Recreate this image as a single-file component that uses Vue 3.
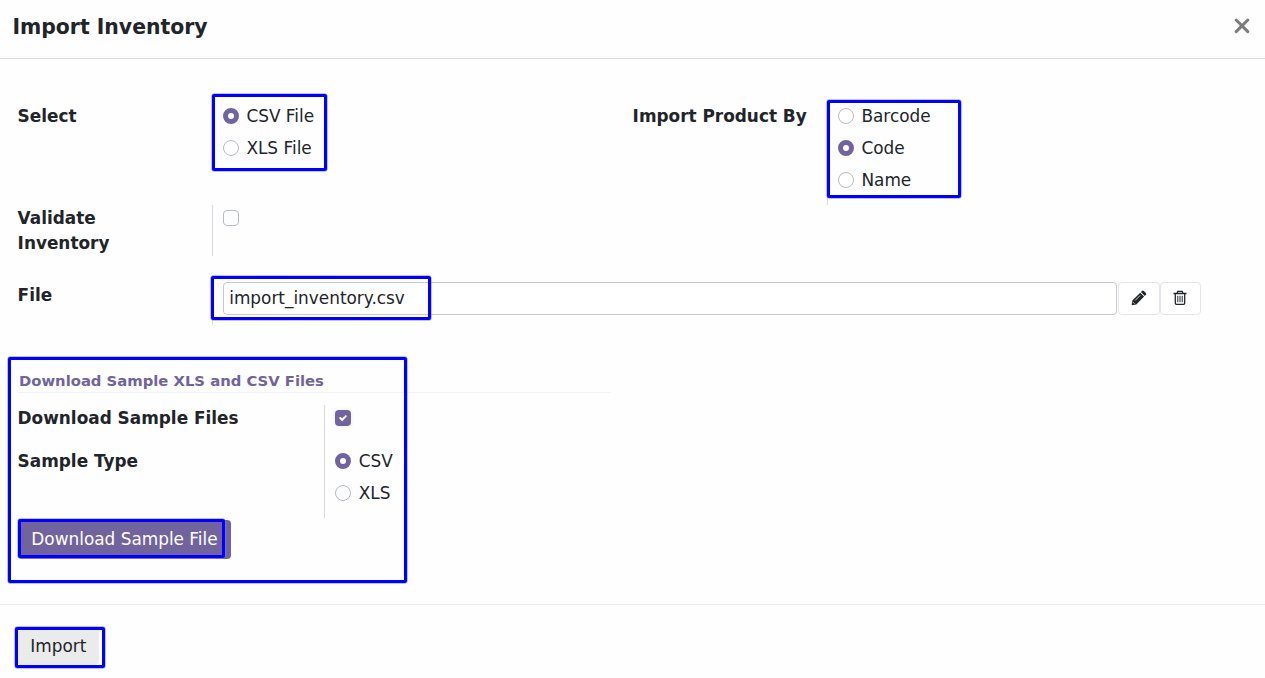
<script setup>
const selectOptions = [
  { label: 'CSV File', on: true },
  { label: 'XLS File', on: false },
]
const productOptions = [
  { label: 'Barcode', on: false },
  { label: 'Code', on: true },
  { label: 'Name', on: false },
]
const sampleOptions = [
  { label: 'CSV', on: true },
  { label: 'XLS', on: false },
]
</script>

<template>
  <div class="dialog">
    <header class="header">
      <h4 class="title">Import Inventory</h4>
      <svg class="close" width="16" height="16" viewBox="0 0 16 16"><path d="M2.2 2 13.8 13.6M13.8 2 2.2 13.6" /></svg>
    </header>

    <main class="body">
      <div class="row options">
        <div class="label">Select</div>
        <div class="field">
          <div v-for="o in selectOptions" :key="o.label" class="radio-item">
            <span class="radio" :class="{ on: o.on }"></span><span>{{ o.label }}</span>
          </div>
        </div>
        <div class="label product">Import Product By</div>
        <div class="field ruled">
          <div v-for="o in productOptions" :key="o.label" class="radio-item">
            <span class="radio" :class="{ on: o.on }"></span><span>{{ o.label }}</span>
          </div>
        </div>
      </div>

      <div class="row validate">
        <div class="label">Validate<br>Inventory</div>
        <div class="field ruled"><span class="check"></span></div>
      </div>

      <div class="row file">
        <div class="label">File</div>
        <div class="field ruled file-field">
          <div class="input">import_inventory.csv</div>
          <button class="icon-btn edit">
            <svg width="16" height="16" viewBox="0 0 16 16">
              <path fill="#212529" d="M.6 15.2 1.4 10.5 9.2 2.7 13.1 6.6 5.3 14.4ZM9.9 2 11 .9Q11.9.2 12.8.9L14.9 3Q15.6 3.9 14.9 4.8L13.8 5.9Z" />
              <path stroke="#fff" stroke-width=".8" fill="none" d="M2 12.2 3.6 13.8M4.2 10.4 9.2 5.4" />
            </svg>
          </button>
          <button class="icon-btn trash">
            <svg width="14" height="16" viewBox="0 0 14 16">
              <path fill="none" stroke="#212529" stroke-width="1.3" d="M.5 3.5H13.5M4 3.3 4.8 1.4H9.2L10 3.3M2.3 3.5V13Q2.3 14.4 3.5 14.4H10.5Q11.7 14.4 11.7 13V3.5" />
              <path stroke="#212529" stroke-width="1" d="M4.8 5.8V12.2M7 5.8V12.2M9.2 5.8V12.2" />
            </svg>
          </button>
        </div>
      </div>

      <section class="sample">
        <div class="section-title">Download Sample XLS and CSV Files</div>
        <div class="sample-grid">
          <div class="sample-labels">
            <div>Download Sample Files</div>
            <div>Sample Type</div>
          </div>
          <div class="sample-fields">
            <span class="check on">
              <svg width="16" height="16" viewBox="0 0 16 16"><path d="M5.2 8.1 7.1 9.8 10.8 6.2" /></svg>
            </span>
            <div v-for="o in sampleOptions" :key="o.label" class="radio-item">
              <span class="radio" :class="{ on: o.on }"></span><span>{{ o.label }}</span>
            </div>
          </div>
        </div>
        <button class="download">Download Sample File</button>
      </section>
    </main>

    <footer class="footer">
      <button class="import">Import</button>
    </footer>

    <div class="mark mark-select"></div>
    <div class="mark mark-product"></div>
    <div class="mark mark-file"></div>
    <div class="mark mark-sample"></div>
    <div class="mark mark-download"></div>
    <div class="mark mark-import"></div>
  </div>
</template>

<style>
body { margin: 0; background: #fff; overflow: hidden; }
</style>

<style scoped>
.dialog, .dialog * { box-sizing: border-box; }
.dialog {
  position: relative;
  width: 1265px;
  height: 678px;
  display: flex;
  flex-direction: column;
  overflow: hidden;
  background: #fefefe;
  color: #212529;
  font: 16.9px/25px "DejaVu Sans", sans-serif;
}
button { font: inherit; margin: 0; padding: 0; cursor: pointer; }
.header {
  height: 59px;
  flex: none;
  display: flex;
  justify-content: space-between;
  align-items: flex-start;
  padding: 12px 15px 0 12.4px;
  border-bottom: 1px solid #dee0e2;
}
.title { margin: 0; font-size: 20.4px; line-height: 30px; font-weight: bold; }
.close { margin-top: 6px; fill: none; stroke: #7d7d7d; stroke-width: 3; stroke-linecap: round; }
.body { height: 545px; flex: none; padding-top: 40px; }
.row { display: flex; padding-left: 17px; }
.options { height: 106px; }
.label { width: 195px; flex: none; font-weight: bold; padding: 5px 0 0 0.6px; }
.product { margin-left: 305px; }
.options .field:nth-child(2) { width: 115px; flex: none; }
.field { padding-left: 11px; }
.ruled { border-left: 1px solid #d8dadd; padding-left: 10px; }
.radio-item { height: 32px; display: flex; align-items: center; gap: 7.4px; padding-top: 2px; }
.radio {
  width: 16px;
  height: 16px;
  flex: none;
  border: 1px solid #b5bbc3;
  border-radius: 50%;
  background: #fff;
}
.radio.on { border: 5px solid #71639e; }
.validate { height: 51px; }
.check {
  display: block;
  width: 16px;
  height: 16px;
  margin-top: 5px;
  border: 1px solid #b5bbc3;
  border-radius: 4px;
  background: #fff;
}
.validate .label { padding-top: 1px; }
.file { height: 50px; margin-top: 19px; }
.file .label { padding-top: 8px; }
.file-field { display: flex; align-items: flex-start; padding-top: 7px; }
.input {
  width: 894px;
  height: 33px;
  margin-right: 1px;
  padding: 3px 5.2px;
  border: 1px solid #c9c9c9;
  border-radius: 4px;
  background: #fff;
}
.icon-btn {
  width: 42px;
  height: 33px;
  display: flex;
  align-items: center;
  justify-content: center;
  padding: 0 1px 1px 0;
  border: 1px solid #e2e5e9;
  border-radius: 4px;
  background: #fff;
}
.trash { width: 41px; }
.sample { margin-top: 44px; padding-left: 17px; }
.section-title {
  width: 593px;
  height: 24px;
  margin-left: 1px;
  padding-left: 1px;
  border-bottom: 1px solid #f2f3f4;
  color: #71639e;
  font-size: 14.8px;
  line-height: 24px;
  font-weight: bold;
}
.sample-grid { display: flex; margin-top: 12px; height: 113px; }
.sample-labels {
  width: 307px;
  padding: 1px 0 0 0.6px;
  font-weight: bold;
  display: flex;
  flex-direction: column;
  gap: 18px;
}
.sample-fields { border-left: 1px solid #d8dadd; padding-left: 10.4px; }
.check.on { background: #71639e; border: 0; margin-bottom: 18px; box-shadow: 0 0 3px 2px #f6f4f9; }
.check.on svg { display: block; fill: none; stroke: #fff; stroke-width: 2; stroke-linecap: round; }
.download {
  width: 213px;
  height: 39px;
  display: block;
  margin: 2px 0 0 1px;
  border: 0;
  border-radius: 4px;
  background: #71639e;
  color: #fff;
}
.footer { flex: 1; border-top: 1px solid #e7eaec; padding: 23px 0 0 17px; }
.import { width: 82px; height: 37px; padding-left: 0.6px; border: 0; border-radius: 4px; background: #ebebeb; color: #212529; }
.mark { position: absolute; border: 3px solid #0000fb; border-radius: 2px; box-shadow: 0 0 0 0.5px #8080ff; }
.mark-select { left: 212px; top: 94px; width: 115px; height: 77px; }
.mark-product { left: 827px; top: 100px; width: 134px; height: 98px; }
.mark-file { left: 211px; top: 276px; width: 220px; height: 44px; }
.mark-sample { left: 8px; top: 357px; width: 399px; height: 226px; }
.mark-download { left: 18px; top: 519px; width: 207px; height: 39px; }
.mark-import { left: 15px; top: 627px; width: 90px; height: 41px; }
</style>
